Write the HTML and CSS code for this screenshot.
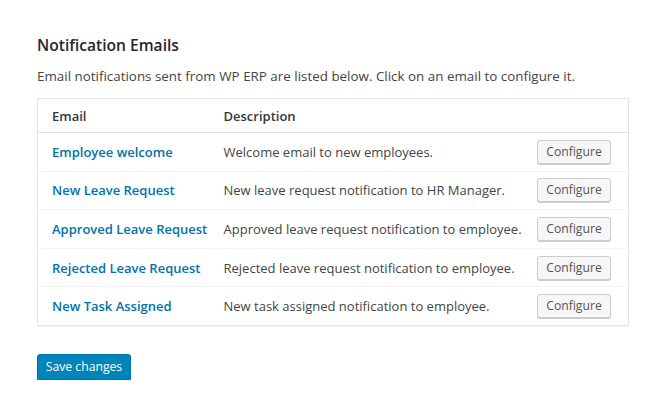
FILE: index.html
```html
<!DOCTYPE html>
<html>
<head>
<meta charset="utf-8">
<link rel="stylesheet" href="styles.css">
</head>
<body>
<div class="wrap">
  <h2 class="title">Notification Emails</h2>
  <p class="intro">Email notifications sent from WP ERP are listed below. Click on an email to configure it.</p>
  <table class="emails">
    <colgroup><col class="w-email"><col><col class="w-act"></colgroup>
    <thead>
      <tr><th>Email</th><th>Description</th><th></th></tr>
    </thead>
    <tbody>
      <tr><td><a href="#">Employee welcome</a></td><td>Welcome email to new employees.</td><td class="c-act"><button class="btn">Configure</button></td></tr>
      <tr><td><a href="#">New Leave Request</a></td><td>New leave request notification to HR Manager.</td><td class="c-act"><button class="btn">Configure</button></td></tr>
      <tr><td><a href="#">Approved Leave Request</a></td><td>Approved leave request notification to employee.</td><td class="c-act"><button class="btn">Configure</button></td></tr>
      <tr><td><a href="#">Rejected Leave Request</a></td><td>Rejected leave request notification to employee.</td><td class="c-act"><button class="btn">Configure</button></td></tr>
      <tr><td><a href="#">New Task Assigned</a></td><td>New task assigned notification to employee.</td><td class="c-act"><button class="btn">Configure</button></td></tr>
    </tbody>
  </table>
  <button class="primary">Save changes</button>
</div>
</body>
</html>
```

FILE: styles.css
```css
html, body {
  margin: 0;
  padding: 0;
  background: #fff;
}
body {
  font-family: "Open Sans", "Liberation Sans", sans-serif;
  color: #32373c;
  font-size: 13px;
}
.wrap {
  padding: 33px 39px 0 37px;
}
.title {
  margin: 0;
  font-size: 15.6px;
  font-weight: 600;
  color: #23282d;
  line-height: 24px;
}
.intro {
  margin: 9px 0 12px;
  line-height: 20px;
  font-size: 13.4px;
  color: #444;
  white-space: nowrap;
}
.emails {
  width: 592px;
  table-layout: fixed;
  border-collapse: collapse;
  border: 1px solid #e5e5e5;
  box-shadow: 0 1px 1px rgba(0,0,0,.04);
  background: #fff;
}
.w-email { width: 172px; }
.w-act { width: 92px; }
.emails th {
  text-align: left;
  font-weight: 600;
  color: #32373c;
  font-size: 13px;
  height: 33px;
  padding: 0 0 0 14px;
  border-bottom: 1px solid #e1e1e1;
  white-space: nowrap;
}
.emails td {
  height: 37.6px;
  padding: 0 0 0 14px;
  border-top: 1px solid #f3f3f3;
  color: #444;
  font-size: 13px;
  white-space: nowrap;
}
.emails tbody tr:first-child td { border-top: none; }
.emails td.c-act { padding: 0 17px 0 0; text-align: right; }
.emails a {
  color: #0073aa;
  font-weight: 600;
  text-decoration: none;
}
.btn {
  font-family: inherit;
  font-size: 12.2px;
  color: #555;
  background: #f7f7f7;
  border: 1px solid #ccc;
  border-radius: 3px;
  box-shadow: 0 1px 0 #ccc;
  height: 24px;
  width: 74px;
  padding: 0;
  line-height: 22px;
}
.primary {
  margin-top: 28px;
  font-family: inherit;
  font-size: 12.2px;
  color: #fff;
  background: #0085ba;
  border: 1px solid #0073aa;
  border-radius: 3px;
  box-shadow: 0 1px 0 #006799;
  height: 26px;
  width: 94px;
  padding: 0;
  line-height: 24px;
}
```
